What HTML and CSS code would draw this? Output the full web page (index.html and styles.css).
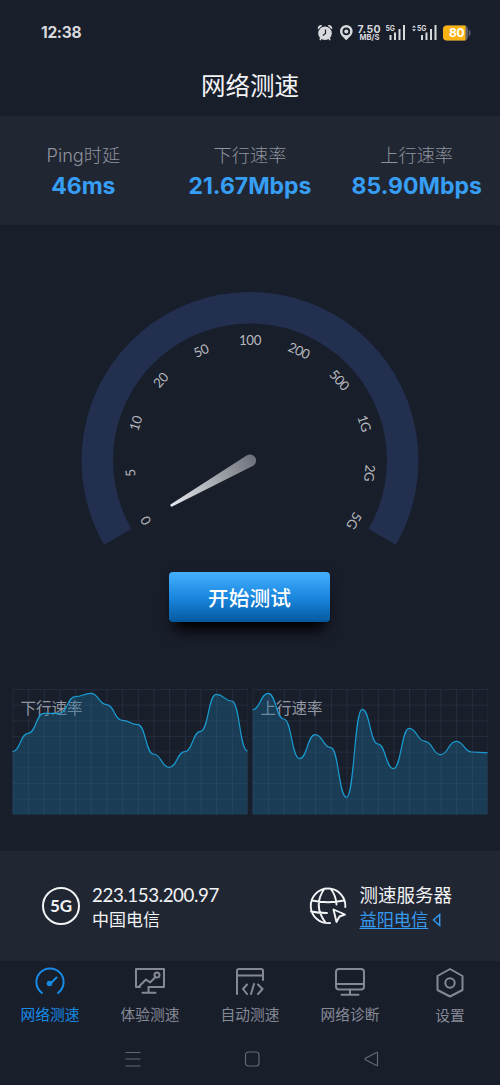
FILE: index.html
```html
<!DOCTYPE html>
<html lang="zh-CN">
<head>
<meta charset="utf-8">
<title>网络测速</title>
<link rel="stylesheet" href="styles.css">
</head>
<body>
<div class="app">
  <header class="status">
    <span class="clock">12:38</span>
    <svg class="status-icons" width="154" height="18" viewBox="317 24 154 18">
      <g fill="#d7d9dd">
        <circle cx="325" cy="33.200" r="6.800"/>
        <path d="M317.600 28.400a4 4 0 0 1 4-3.400l.6.7-3.900 3.600zM332.400 28.400a4 4 0 0 0-4-3.400l-.6.7 3.900 3.600zM320 37l2 1.500-1.500 2-1-.6zM330 37l-2 1.500 1.500 2 1-.6z"/>
        <path fill-rule="evenodd" d="M346.300 25a6.300 6.300 0 0 1 6.300 6.300c0 3.600-3.400 6-6.300 9-2.900-3-6.300-5.400-6.300-9a6.300 6.300 0 0 1 6.300-6.300zm0 2.600a3.800 3.800 0 1 0 0 7.600 3.800 3.800 0 0 0 0-7.600z"/>
        <circle cx="346.300" cy="31.400" r="2"/>
        <path d="M389.500 35h2v5h-2zM394 32.500h2v7.500h-2zM398.500 29h2v11h-2zM403 25h2v15h-2zM421 35h2v5h-2zM425.500 32.500h2v7.500h-2zM430 29h2v11h-2zM434.500 25h2v15h-2z"/>
        <path d="M412 27.500l2-2.300 2 2.300zM412 29.300h4l-2 2.300z"/>
      </g>
      <path d="M325.500 29.500v4l-2.700 2" fill="none" stroke="#191e2b" stroke-width="1.200"/>
      <text class="rate-number" x="357.500" y="32.800" textLength="23">7.50</text>
      <text class="rate-unit" x="359.500" y="39.900" textLength="20" lengthAdjust="spacingAndGlyphs">MB/S</text>
      <text class="network" x="385.500" y="31" textLength="9.500" lengthAdjust="spacingAndGlyphs">5G</text>
      <text class="network" x="417" y="31" textLength="9.500" lengthAdjust="spacingAndGlyphs">5G</text>
      <rect x="443" y="25.500" width="25" height="15" rx="4" fill="#5d606a"/>
      <path d="M465.500 25.500h-18.500a4 4 0 0 0-4 4v7a4 4 0 0 0 4 4h18.500z" fill="#fcb211"/>
      <path d="M468.700 29.500c1.300.5 1.800 1.500 1.800 3.500s-.5 3-1.800 3.500z" fill="#5d606a"/>
      <text class="battery" x="449" y="37.400" textLength="15.500">80</text>
    </svg>
  </header>
  <h1 class="title">网络测速</h1>

  <section class="stats">
    <div class="stat"><span class="stat-label">Ping时延</span><strong class="stat-value">46ms</strong></div>
    <div class="stat"><span class="stat-label">下行速率</span><strong class="stat-value">21.67Mbps</strong></div>
    <div class="stat"><span class="stat-label">上行速率</span><strong class="stat-value">85.90Mbps</strong></div>
  </section>

  <main class="main">
    <svg class="gauge" width="340" height="260" viewBox="-170 -170.500 340 260">
      <defs>
        <linearGradient id="needle" gradientUnits="userSpaceOnUse" x1="-79" y1="45" x2="6" y2="-3">
          <stop offset="0" stop-color="#e6e8ee"/><stop offset="1" stop-color="#6c6f77"/>
        </linearGradient>
      </defs>
      <path d="M-132.200 76.350A152.700 152.700 0 1 1 132.200 76.350" fill="none" stroke="#222f4f" stroke-width="31.500"/>
      <g class="ticks">
        <text transform="rotate(-120) translate(0 -115.500)">0</text>
        <text transform="rotate(-96) translate(0 -115.500)">5</text>
        <text transform="rotate(-72) translate(0 -115.500)">10</text>
        <text transform="rotate(-48) translate(0 -115.500)">20</text>
        <text transform="rotate(-24) translate(0 -115.500)">50</text>
        <text transform="translate(0 -115.500)">100</text>
        <text transform="rotate(24) translate(0 -115.500)">200</text>
        <text transform="rotate(48) translate(0 -115.500)">500</text>
        <text transform="rotate(72) translate(0 -115.500)">1G</text>
        <text transform="rotate(96) translate(0 -115.500)">2G</text>
        <text transform="rotate(120) translate(0 -115.500)">5G</text>
      </g>
      <path d="M-79.500 44L-3-5.200A6 6 0 1 1 3.200 5.200L-78.300 46.300Q-80 45.800-79.500 44z" fill="url(#needle)"/>
    </svg>
    <button class="start">开始测试</button>
    <div class="charts">
      <figure class="chart">
        <svg width="236" height="127" viewBox="-.5 -1 236 127">
          <defs>
            <pattern id="grid" width="15.667" height="15.667" patternUnits="userSpaceOnUse">
              <path d="M0 0H15.667M0 0V15.667" fill="none" stroke="#5a74a0" stroke-opacity=".28" stroke-width="1.200"/>
            </pattern>
          </defs>
          <text class="chart-label" x="8" y="24.500">下行速率</text>
          <path class="area" d="M0 62.600C7.830 62.600 7.830 44.300 15.670 44.300S23.500 24.300 31.330 24.300 39.170 24.300 47 24.300 54.830 7.600 62.670 7.600 70.500 4.300 78.330 4.300 86.170 15.600 94 15.600 101.830 31.300 109.670 31.300 117.500 35.600 125.330 35.600 133.170 65 141 65 148.830 78.300 156.670 78.300 164.500 62.600 172.330 62.600 180.170 42.300 188 42.300 195.830 5.300 203.670 5.300 211.500 12 219.330 12 227.170 62 235 62V125.500H0z"/>
          <path class="line" d="M0 62.600C7.830 62.600 7.830 44.300 15.670 44.300S23.500 24.300 31.330 24.300 39.170 24.300 47 24.300 54.830 7.600 62.670 7.600 70.500 4.300 78.330 4.300 86.170 15.600 94 15.600 101.830 31.300 109.670 31.300 117.500 35.600 125.330 35.600 133.170 65 141 65 148.830 78.300 156.670 78.300 164.500 62.600 172.330 62.600 180.170 42.300 188 42.300 195.830 5.300 203.670 5.300 211.500 12 219.330 12 227.170 62 235 62"/>
          <rect width="235.500" height="125.500" fill="url(#grid)"/>
        </svg>
      </figure>
      <figure class="chart">
        <svg width="236" height="127" viewBox="-.5 -1 236 127">
          <text class="chart-label" x="8" y="24.500">上行速率</text>
          <path class="area" d="M0 20.600C7.830 20.600 7.830 4.300 15.670 4.300S23.500 30 31.330 30 39.170 69.600 47 69.600 54.830 45.600 62.670 45.600 70.500 58.600 78.330 58.600 86.170 108.300 94 108.300 101.830 20.300 109.670 20.300 117.500 55 125.330 55 133.170 79.600 141 79.600 148.830 39.300 156.670 39.300 164.500 52.300 172.330 52.300 180.170 65.600 188 65.600 195.830 52.300 203.670 52.300 211.500 63 219.330 63 227.170 63.600 235 63.600V125.500H0z"/>
          <path class="line" d="M0 20.600C7.830 20.600 7.830 4.300 15.670 4.300S23.500 30 31.330 30 39.170 69.600 47 69.600 54.830 45.600 62.670 45.600 70.500 58.600 78.330 58.600 86.170 108.300 94 108.300 101.830 20.300 109.670 20.300 117.500 55 125.330 55 133.170 79.600 141 79.600 148.830 39.300 156.670 39.300 164.500 52.300 172.330 52.300 180.170 65.600 188 65.600 195.830 52.300 203.670 52.300 211.500 63 219.330 63 227.170 63.600 235 63.600"/>
          <rect width="235.500" height="125.500" fill="url(#grid)"/>
        </svg>
      </figure>
    </div>
  </main>

  <section class="info">
    <div class="provider">
      <span class="badge">5G</span>
      <div class="lines"><span class="ip">223.153.200.97</span><span class="carrier">中国电信</span></div>
    </div>
    <div class="server">
      <svg class="globe" width="38" height="38" viewBox="309 887 38 38" fill="none" stroke="#f2f3f5" stroke-width="1.900" stroke-linecap="round" stroke-linejoin="round">
        <path d="M345.300 907A17.300 17.300 0 1 0 330 923M312 900.500q16 3.500 32 0M311 911.500q7 1.500 16 1.500M324.500 888.500q-12 17 1 34M330.500 888.500q5.500 7 6 16"/>
        <path d="M333.500 909.500l11.500 5-5.500 2-3 5.500z"/>
      </svg>
      <div class="lines"><span class="server-title">测速服务器</span>
        <span class="server-name"><a class="link">益阳电信</a><svg width="9" height="14" viewBox="0 0 9 14"><path d="M7.700 1.500v11L1.500 7z" fill="none" stroke="#369bf0" stroke-width="1.400"/></svg></span></div>
    </div>
  </section>

  <nav class="tabs">
    <div class="tab active">
      <svg viewBox="0 0 32 32"><path d="M8 27a13.600 13.600 0 1 1 16 0"/><path d="M16 18l6.500-6.500"/><circle cx="15.500" cy="17.500" r="1.800" fill="currentColor"/></svg>
      <span>网络测速</span>
    </div>
    <div class="tab">
      <svg viewBox="0 0 32 32"><path d="M6 21H2V3h28v18H14.500v5M4.500 21l7.500-7.500 4 3 5.500-5.500M8.500 26.700h13"/><circle cx="23" cy="9" r="2.500"/></svg>
      <span>体验测速</span>
    </div>
    <div class="tab">
      <svg viewBox="0 0 32 32"><path d="M3 28V5q0-2 2-2h22q2 0 2 2v9M3 9.500h26M13 18.500l-4 4.500 4 5M24 18.500l4.500 4.500-4.500 5M20 18l-3 10"/></svg>
      <span>自动测速</span>
    </div>
    <div class="tab">
      <svg viewBox="0 0 32 32"><rect x="2" y="3" width="28" height="20.500" rx="3"/><path d="M2 18h28M16 23.500v5M7.500 28.700h17"/></svg>
      <span>网络诊断</span>
    </div>
    <div class="tab settings">
      <svg viewBox="0 0 32 32"><path d="M16 3l12.500 7v14L16 30.500 3.500 24V10z"/><circle cx="16" cy="17" r="4.700"/></svg>
      <span>设置</span>
    </div>
  </nav>
  <footer class="system">
    <svg width="16" height="16" viewBox="0 0 16 16"><path d="M.5 1.500h15M.5 8h15M.5 15h15"/></svg>
    <svg width="16" height="16" viewBox="0 0 16 16"><rect x="1.500" y="1" width="13.500" height="14" rx="3"/></svg>
    <svg width="16" height="16" viewBox="0 0 16 16"><path d="M14.500 2v12q0 1-1 .5l-11-5.700q-1-.8 0-1.600l11-5.700q1-.5 1 .5z"/></svg>
  </footer>
</div>
</body>
</html>
```
FILE: styles.css
```css
* { box-sizing: border-box; }
body { margin: 0; background: #191e2b; color: #f2f3f5; font-family: Lato, "Noto Sans CJK SC", sans-serif; }
.app { display: flex; flex-direction: column; width: 500px; height: 1085px; overflow: hidden; }
.status { height: 65px; padding: 0 29px 0 41px; display: flex; align-items: center; justify-content: space-between; }
.clock { font: 700 15.500px/20px Inter, sans-serif; color: #d7d9dd; letter-spacing: -.3px; margin-top: 1px; }
.status-icons { display: block; }
.rate-number { font: 700 10.500px Inter, sans-serif; fill: #d7d9dd; }
.rate-unit { font: 700 8px Inter, sans-serif; fill: #d7d9dd; }
.network { font: 700 8px Inter, sans-serif; fill: #d7d9dd; }
.battery { font: 700 12px Inter, sans-serif; fill: #fff; }
.title { height: 50.500px; margin: 0; text-align: center; font-size: 24.500px; font-weight: 400; line-height: 42px; }
.stats { height: 109.500px; background: #212633; display: grid; grid-template-columns: repeat(3, 1fr); padding-top: 26.500px; }
.stat { display: flex; flex-direction: column; align-items: center; }
.stat-label { color: #8f939d; font-family: Inter, "Noto Sans CJK SC", sans-serif; font-size: 18.200px; font-weight: 300; line-height: 26px; }
.stat-value { color: #369ff5; font: 700 23px/36px Inter, sans-serif; }
.main { height: 626px; padding-top: 65px; display: flex; flex-direction: column; align-items: center; }
.gauge { flex: none; display: block; }
.ticks text { font: 13.300px Lato, sans-serif; letter-spacing: -.4px; fill: #b6b8be; text-anchor: middle; }
.start { width: 161px; height: 50px; margin: 21.500px 1px 0 0; padding: 0; flex: none; border: 0; border-radius: 4px; background: linear-gradient(#43b0ff, #1b88df 50%, #0459a0); box-shadow: 0 14px 14px -6px #000, 0 2px 10px rgba(0, 0, 0, .15); color: #fff; font: 500 20.700px/50px "Noto Sans CJK SC", sans-serif; }
.charts { display: flex; gap: 4px; margin-top: 66.500px; }
.chart { margin: 0; height: 127px; }
.chart svg { display: block; }
.chart-label { font: 15.500px "Noto Sans CJK SC", sans-serif; fill: #9498a2; }
.area { fill: #1d729a; fill-opacity: .37; }
.line { fill: none; stroke: #189bd0; stroke-width: 1.200; }
.info { height: 110px; background: #212633; padding: 2px 48px 0 42px; display: flex; align-items: center; justify-content: space-between; }
.provider, .server { display: flex; align-items: center; gap: 12px; }
.globe { margin-top: -2px; }
.badge { width: 38px; height: 38px; margin-top: -2px; border: 2px solid #f2f3f5; border-radius: 50%; text-align: center; font: 700 17px/34px Lato, sans-serif; }
.lines { display: flex; flex-direction: column; }
.ip { font-size: 18.700px; letter-spacing: -.4px; line-height: 25px; }
.carrier { font-size: 17px; line-height: 24px; }
.server-title { font-size: 18.500px; line-height: 25px; }
.server-name { display: flex; align-items: center; gap: 4px; height: 24px; }
.link { color: #369bf0; font-size: 17.200px; line-height: 24px; text-decoration: underline; text-decoration-thickness: 1px; text-underline-offset: 2px; }
.tabs { height: 74px; display: grid; grid-template-columns: repeat(5, 1fr); }
.tab { display: flex; flex-direction: column; align-items: center; padding-top: 5px; color: #858995; font-size: 14.700px; line-height: 32px; }
.tab svg { width: 32px; height: 32px; flex: none; fill: none; stroke: currentColor; stroke-width: 2; stroke-linejoin: round; stroke-linecap: round; }
.active { color: #178be5; }
.settings span { padding-top: 1px; }
.system { height: 50px; padding: 0 121px 2px 125px; display: flex; align-items: center; justify-content: space-between; }
.system svg { fill: none; stroke: #646873; stroke-width: 1.200; }
```
